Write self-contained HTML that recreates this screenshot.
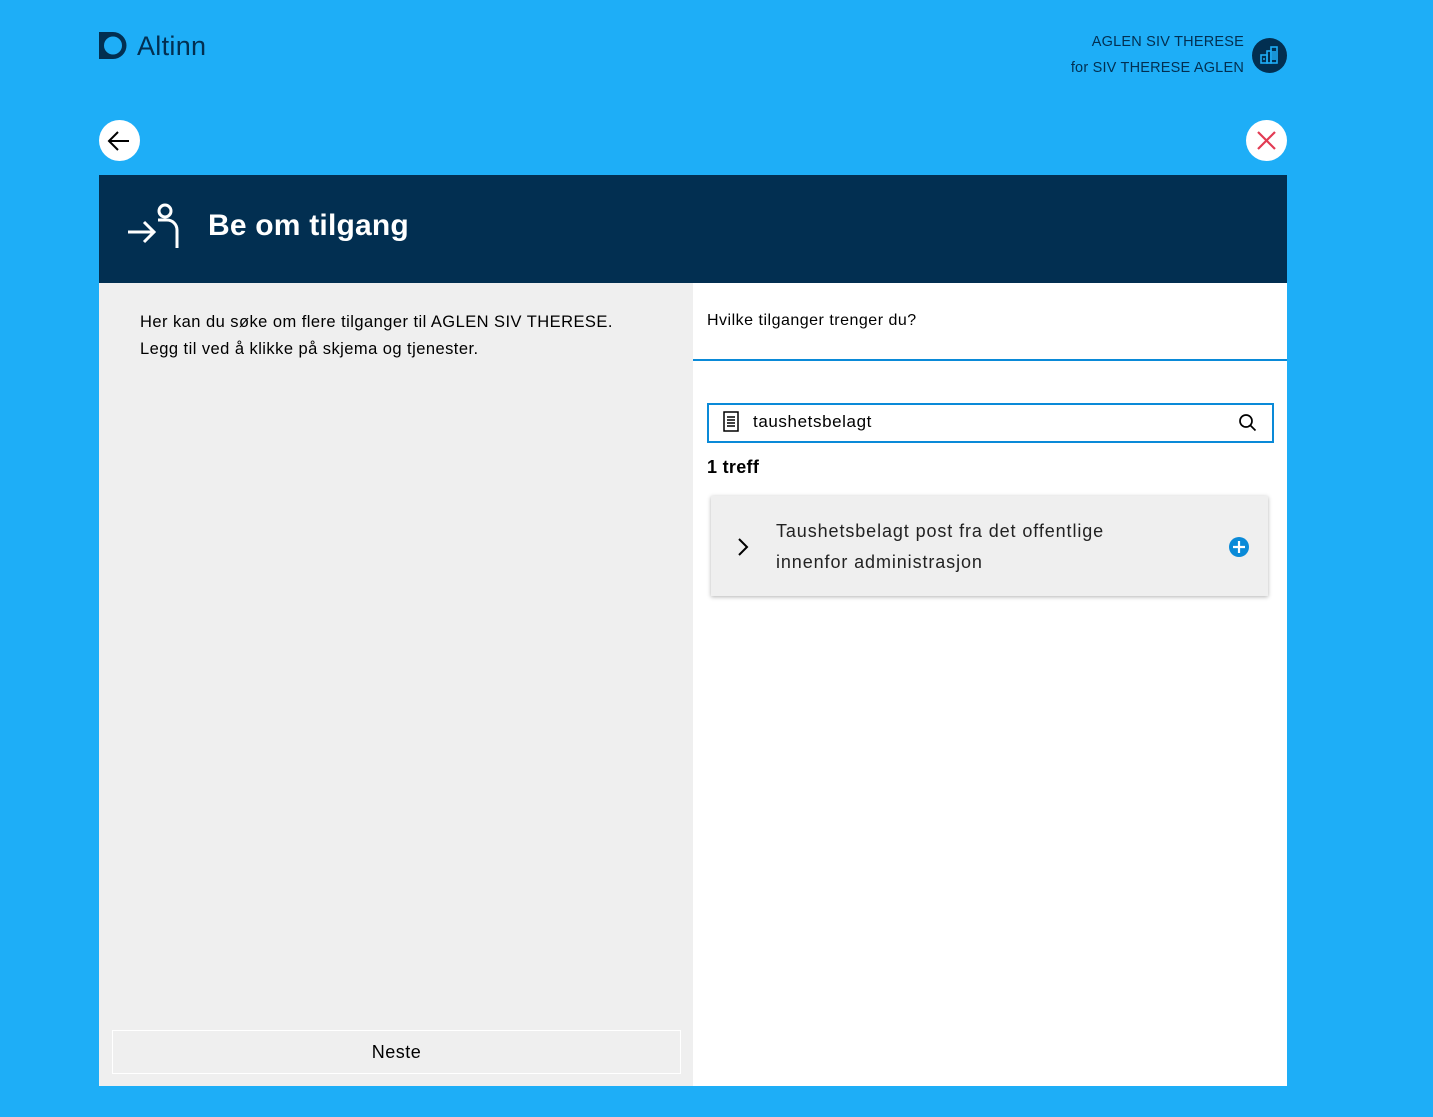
<!DOCTYPE html>
<html><head><meta charset="utf-8"><style>
*{box-sizing:border-box;margin:0;padding:0}
body{width:1433px;height:1117px;background:#1eaef7;font-family:"Liberation Sans",sans-serif;position:relative;overflow:hidden;color:#000}
.abs{position:absolute}
</style></head><body>
<div class="abs" style="left:99px;top:32px;width:28px;height:27px;">
<svg width="28" height="27" viewBox="0 0 28 27"><path d="M0 0H14A13.5 13.5 0 0 1 14 27H0Z" fill="#022f51"/><circle cx="14" cy="13.5" r="9" fill="#1eaef7"/><path d="M0 0h4v27H0z" fill="#022f51"/></svg></div>
<div class="abs" style="left:137px;top:31px;font-size:27px;color:#022f51;letter-spacing:0.3px;">Altinn</div>
<div class="abs" style="right:189px;top:29px;font-size:14.5px;color:#022f51;text-align:right;line-height:26px;letter-spacing:0.2px;">AGLEN SIV THERESE<br>for SIV THERESE AGLEN</div>
<div class="abs" style="left:1252px;top:38px;width:35px;height:35px;border-radius:50%;background:#022f51;">
<svg width="35" height="35" viewBox="0 0 35 35" fill="none" stroke="#1eaef7" stroke-width="1.6"><rect x="9" y="17" width="6" height="8"/><rect x="15" y="13" width="4" height="12"/><rect x="19" y="9" width="6" height="16"/><path d="M11 21h2M21 13v9M23 13v9"/></svg></div>
<div class="abs" style="left:99px;top:120px;width:41px;height:41px;border-radius:50%;background:#fff;">
<svg width="41" height="41" viewBox="0 0 41 41" fill="none" stroke="#000" stroke-width="2"><path d="M30 21H11M19 12l-9 9 9 9"/></svg></div>
<div class="abs" style="left:1246px;top:120px;width:41px;height:41px;border-radius:50%;background:#fff;">
<svg width="41" height="41" viewBox="0 0 41 41" fill="none" stroke="#e23b53" stroke-width="2.2"><path d="M12 12l17 17M29 12l-17 17"/></svg></div>
<div class="abs" style="left:99px;top:175px;width:1188px;height:108px;background:#022f51;"></div>
<div class="abs" style="left:126px;top:200px;">
<svg width="56" height="50" viewBox="0 0 56 50" fill="none" stroke="#fff" stroke-width="3"><path d="M2 32H28M18 22l10 10-10 10"/><circle cx="39" cy="11" r="6"/><path d="M32 20h9a10 10 0 0 1 10 10v18"/></svg></div>
<div class="abs" style="left:208px;top:209px;font-size:30px;color:#fff;font-weight:bold;letter-spacing:0.2px;">Be om tilgang</div>
<div class="abs" style="left:99px;top:283px;width:594px;height:803px;background:#efefef;"></div>
<div class="abs" style="left:693px;top:283px;width:594px;height:803px;background:#fff;"></div>
<div class="abs" style="left:140px;top:309px;font-size:16.5px;line-height:27px;color:#000;letter-spacing:0.45px;">Her kan du søke om flere tilganger til AGLEN SIV THERESE.<br>Legg til ved å klikke på skjema og tjenester.</div>
<div class="abs" style="left:707px;top:312px;font-size:16px;letter-spacing:0.5px;">Hvilke tilganger trenger du?</div>
<div class="abs" style="left:693px;top:359px;width:594px;height:2px;background:#0a8ad8;"></div>
<div class="abs" style="left:707px;top:403px;width:567px;height:40px;border:2px solid #0a8ad8;background:#fff;"></div>
<div class="abs" style="left:722px;top:411px;"><svg width="18" height="22" viewBox="0 0 18 22" fill="none" stroke="#000" stroke-width="1.5"><rect x="2" y="1" width="14" height="19"/><path d="M5 6h8M5 9h8M5 12h8M5 15h8"/></svg></div>
<div class="abs" style="left:753px;top:412px;font-size:17px;letter-spacing:0.6px;">taushetsbelagt</div>
<div class="abs" style="left:1237px;top:412px;"><svg width="22" height="22" viewBox="0 0 22 22" fill="none" stroke="#000" stroke-width="1.7"><circle cx="9" cy="9" r="6"/><path d="M13.5 13.5l5 5"/></svg></div>
<div class="abs" style="left:707px;top:457px;font-size:18px;font-weight:bold;letter-spacing:0.3px;">1 treff</div>
<div class="abs" style="left:711px;top:496px;width:557px;height:100px;background:#efefef;box-shadow:0 1px 4px rgba(0,0,0,.3);"></div>
<div class="abs" style="left:734px;top:536px;"><svg width="18" height="22" viewBox="0 0 18 22" fill="none" stroke="#000" stroke-width="2"><path d="M5 3l8 8-8 8"/></svg></div>
<div class="abs" style="left:776px;top:516px;font-size:18px;line-height:31px;color:#222;letter-spacing:0.9px;">Taushetsbelagt post fra det offentlige<br>innenfor administrasjon</div>
<div class="abs" style="left:1229px;top:537px;width:20px;height:20px;border-radius:50%;background:#0a8ad8;">
<svg width="20" height="20" viewBox="0 0 20 20" stroke="#fff" stroke-width="2.2"><path d="M10 4v12M4 10h12"/></svg></div>
<div class="abs" style="left:112px;top:1030px;width:569px;height:44px;border:1px solid #fff;font-size:18px;text-align:center;line-height:42px;letter-spacing:0.5px;">Neste</div>
</body></html>
